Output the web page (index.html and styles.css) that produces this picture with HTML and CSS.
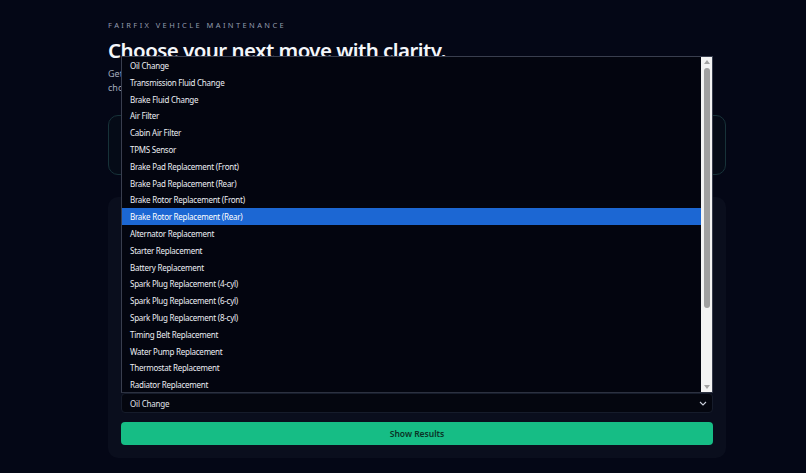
FILE: index.html
```html
<!DOCTYPE html>
<html lang="en">
<head>
  <meta charset="UTF-8">
  <meta name="viewport" content="width=device-width, initial-scale=1.0">
  <title>FairFix Vehicle Maintenance</title>
  <link rel="stylesheet" href="styles.css">
</head>
<body>
  <div class="page">
    <!-- 页头 -->
    <header class="hero">
      <div class="eyebrow">FairFix Vehicle Maintenance</div>
      <h1 class="hero-title">Choose your next move with clarity.</h1>
      <p class="hero-text">
        Get honest price ranges for common repairs and routine service, then<br>
        choose the job that fits your car and your budget.
      </p>
    </header>

    <!-- 提示卡片（被下拉列表盖住） -->
    <div class="notice-card"></div>

    <!-- 查询表单 -->
    <div class="form-card">
      <div class="form-intro"></div>

      <div class="field">
        <div class="select-box">
          <span class="select-value">Oil Change</span>
          <svg class="select-arrow" width="8" height="5" viewBox="0 0 8 5"><path d="M1 1l3 3 3-3" fill="none" stroke="#c9ceda" stroke-width="1.1"/></svg>
        </div>

        <!-- 展开的下拉列表 -->
        <div class="listbox">
          <ul class="options">
            <li>Oil Change</li>
            <li>Transmission Fluid Change</li>
            <li>Brake Fluid Change</li>
            <li>Air Filter</li>
            <li>Cabin Air Filter</li>
            <li>TPMS Sensor</li>
            <li>Brake Pad Replacement (Front)</li>
            <li>Brake Pad Replacement (Rear)</li>
            <li>Brake Rotor Replacement (Front)</li>
            <li class="active">Brake Rotor Replacement (Rear)</li>
            <li>Alternator Replacement</li>
            <li>Starter Replacement</li>
            <li>Battery Replacement</li>
            <li>Spark Plug Replacement (4-cyl)</li>
            <li>Spark Plug Replacement (6-cyl)</li>
            <li>Spark Plug Replacement (8-cyl)</li>
            <li>Timing Belt Replacement</li>
            <li>Water Pump Replacement</li>
            <li>Thermostat Replacement</li>
            <li>Radiator Replacement</li>
          </ul>
          <div class="scrollbar">
            <span class="scroll-up"></span>
            <span class="scroll-thumb"></span>
            <span class="scroll-down"></span>
          </div>
        </div>
      </div>

      <button class="show-btn">Show Results</button>
    </div>
  </div>
</body>
</html>
```

FILE: styles.css
```css
/* 全局 */
* {
  margin: 0;
  padding: 0;
  box-sizing: border-box;
}

body {
  background-color: #040716;
  font-family: "Noto Sans", "Open Sans", sans-serif;
  color: #e6e8ee;
}

.page {
  width: 618px;
  margin-left: 108px;
  padding-top: 20px;
}

/* 页头 */
.eyebrow {
  font-size: 7.5px;
  letter-spacing: 2.4px;
  text-transform: uppercase;
  color: #939cae;
  line-height: 10px;
}

.hero-title {
  font-size: 20.5px;
  font-weight: 600;
  letter-spacing: -0.55px;
  color: #f4f6fa;
  margin-top: 6px;
  line-height: 28px;
}

.hero-text {
  font-size: 9px;
  line-height: 14px;
  color: #a4acbc;
  margin-top: 3px;
}

/* 提示卡片 */
.notice-card {
  margin-top: 20px;
  height: 60px;
  border: 1px solid #173239;
  border-radius: 10px;
  background-color: #050b17;
}

/* 表单卡片 */
.form-card {
  margin-top: 22px;
  height: 261px;
  background-color: #0a0e1d;
  border-radius: 10px;
  padding: 13px;
  display: flex;
  flex-direction: column;
}

.form-intro {
  flex: 1;
}

.field {
  position: relative;
}

.select-box {
  height: 20px;
  background-color: #04060f;
  border: 1px solid #161c2b;
  border-radius: 4px;
  display: flex;
  align-items: center;
  justify-content: space-between;
  padding: 0 5px 0 8px;
  font-size: 8px;
  letter-spacing: -0.2px;
  color: #e0e3ea;
}

/* 展开的下拉列表，盖在上方内容之上 */
.listbox {
  position: absolute;
  left: 0;
  right: 0;
  bottom: 100%;
  height: 337px;
  display: flex;
  background-color: #03050f;
  border: 1px solid #393e4e;
  border-bottom-color: #2c3140;
  z-index: 10;
}

.options {
  flex: 1;
  list-style: none;
}

.options li {
  height: 16.8px;
  line-height: 15.8px;
  padding: 1px 0 0 8px;
  font-size: 8px;
  letter-spacing: -0.25px;
  color: #eceef3;
  white-space: nowrap;
}

.options li.active {
  background-color: #1c67d3;
  color: #fff;
}

.scrollbar {
  width: 11px;
  background-color: #f3f3f3;
  display: flex;
  flex-direction: column;
  align-items: center;
}

.scroll-up,
.scroll-down {
  width: 0;
  height: 0;
  border-left: 3.5px solid transparent;
  border-right: 3.5px solid transparent;
}

.scroll-up {
  border-bottom: 4px solid #a3a3a3;
  margin-top: 3px;
}

.scroll-down {
  border-top: 4px solid #a3a3a3;
  margin-top: auto;
  margin-bottom: 3px;
}

.scroll-thumb {
  width: 6px;
  height: 240px;
  margin-top: 4px;
  background-color: #a0a0a0;
  border-radius: 3px;
}

.show-btn {
  margin-top: 9px;
  height: 23px;
  width: 100%;
  border: none;
  border-radius: 4px;
  background-color: #16bd85;
  color: #0a3326;
  font-family: inherit;
  font-size: 8.5px;
  font-weight: 600;
}
```
